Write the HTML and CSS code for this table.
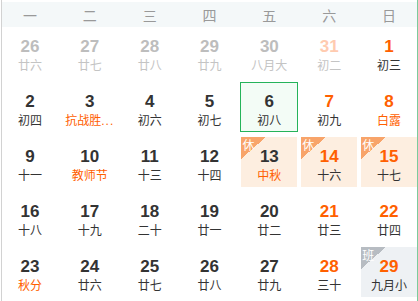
FILE: index.html
```html
<!DOCTYPE html>
<html lang="zh-CN">
<head>
<meta charset="utf-8">
<title>日历</title>
<link rel="stylesheet" href="styles.css">
</head>
<body>
<div class="cal">
  <div class="week">
    <span>一</span><span>二</span><span>三</span><span>四</span><span>五</span><span>六</span><span>日</span>
  </div>
  <div class="days">
    <div class="day other"><b class="num">26</b><span class="lunar">廿六</span></div>
    <div class="day other"><b class="num">27</b><span class="lunar">廿七</span></div>
    <div class="day other"><b class="num">28</b><span class="lunar">廿八</span></div>
    <div class="day other"><b class="num">29</b><span class="lunar">廿九</span></div>
    <div class="day other"><b class="num">30</b><span class="lunar">八月大</span></div>
    <div class="day other wkd"><b class="num">31</b><span class="lunar">初二</span></div>
    <div class="day wkd"><b class="num">1</b><span class="lunar">初三</span></div>

    <div class="day"><b class="num">2</b><span class="lunar">初四</span></div>
    <div class="day"><b class="num">3</b><span class="lunar fest" title="抗战胜利纪念日">抗战胜<span class="dots">...</span></span></div>
    <div class="day"><b class="num">4</b><span class="lunar">初六</span></div>
    <div class="day"><b class="num">5</b><span class="lunar">初七</span></div>
    <div class="day sel"><b class="num">6</b><span class="lunar">初八</span></div>
    <div class="day wkd"><b class="num">7</b><span class="lunar">初九</span></div>
    <div class="day wkd"><b class="num">8</b><span class="lunar fest">白露</span></div>

    <div class="day"><b class="num">9</b><span class="lunar">十一</span></div>
    <div class="day"><b class="num">10</b><span class="lunar fest">教师节</span></div>
    <div class="day"><b class="num">11</b><span class="lunar">十三</span></div>
    <div class="day"><b class="num">12</b><span class="lunar">十四</span></div>
    <div class="day rest"><span class="tag">休</span><b class="num">13</b><span class="lunar fest">中秋</span></div>
    <div class="day rest wkd"><span class="tag">休</span><b class="num">14</b><span class="lunar">十六</span></div>
    <div class="day rest wkd"><span class="tag">休</span><b class="num">15</b><span class="lunar">十七</span></div>

    <div class="day"><b class="num">16</b><span class="lunar">十八</span></div>
    <div class="day"><b class="num">17</b><span class="lunar">十九</span></div>
    <div class="day"><b class="num">18</b><span class="lunar">二十</span></div>
    <div class="day"><b class="num">19</b><span class="lunar">廿一</span></div>
    <div class="day"><b class="num">20</b><span class="lunar">廿二</span></div>
    <div class="day wkd"><b class="num">21</b><span class="lunar">廿三</span></div>
    <div class="day wkd"><b class="num">22</b><span class="lunar">廿四</span></div>

    <div class="day"><b class="num">23</b><span class="lunar fest">秋分</span></div>
    <div class="day"><b class="num">24</b><span class="lunar">廿六</span></div>
    <div class="day"><b class="num">25</b><span class="lunar">廿七</span></div>
    <div class="day"><b class="num">26</b><span class="lunar">廿八</span></div>
    <div class="day"><b class="num">27</b><span class="lunar">廿九</span></div>
    <div class="day wkd"><b class="num">28</b><span class="lunar">三十</span></div>
    <div class="day work wkd"><span class="tag">班</span><b class="num">29</b><span class="lunar">九月小</span></div>
  </div>
</div>
</body>
</html>
```
FILE: styles.css
```css
html, body {
  margin: 0;
  padding: 0;
  background: #fff;
}
body {
  font-family: "Liberation Sans", "Noto Sans CJK SC", sans-serif;
}
.cal {
  width: 415px;
  height: 301px;
  margin-left: 1px;
  border-left: 1px solid #d2d2d2;
  border-right: 1px solid #7ccb9c;
  overflow: hidden;
}
.week {
  margin-top: 2px;
  height: 25px;
  background: #f4f8f9;
  display: grid;
  grid-template-columns: repeat(7, 1fr);
  column-gap: 4px;
  align-items: center;
  justify-items: center;
  font-family: "Noto Sans CJK SC", sans-serif;
  font-size: 14px;
  color: #999;
}
.days {
  display: grid;
  grid-template-columns: repeat(7, 1fr);
  grid-auto-rows: 50px;
  column-gap: 4px;
  row-gap: 5px;
}
.day {
  position: relative;
  min-width: 0;
  box-sizing: border-box;
  padding-top: 10px;
  display: flex;
  flex-direction: column;
  align-items: center;
}
.num {
  font-size: 17px;
  line-height: 20px;
  font-weight: bold;
  color: #333;
}
.lunar {
  font-family: "Noto Sans CJK SC", sans-serif;
  font-size: 12px;
  line-height: 16px;
  color: #333;
  white-space: nowrap;
}
.dots {
  font-family: "Liberation Sans", sans-serif;
  letter-spacing: 1px;
}
.wkd .num { color: #ff6000; }
.fest { color: #ff6000; }
.other .num { color: #bdbdbd; }
.other .lunar { color: #c4c4c4; }
.other.wkd .num { color: #ffcbb0; }
.sel {
  margin: 0 -1px;
  padding-top: 9px;
  background: #f3fcf6;
  border: 1px solid #25b35a;
}
.rest { background: #fdeee0; }
.work { background: #eef1f4; }
.tag {
  position: absolute;
  left: 0;
  top: 0;
  width: 25px;
  height: 22px;
  box-sizing: border-box;
  padding-left: 1px;
  font-family: "Noto Sans CJK SC", sans-serif;
  font-size: 12px;
  line-height: 15px;
  color: #fff;
}
.rest .tag { background: linear-gradient(to bottom right, #f8a46a 50%, transparent 50%); }
.work .tag { background: linear-gradient(to bottom right, #b7bcc2 50%, transparent 50%); }
```
